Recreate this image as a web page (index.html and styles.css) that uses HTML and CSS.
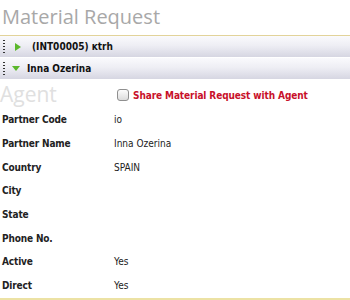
FILE: index.html
```html
<!DOCTYPE html>
<html lang="en">
<head>
    <meta charset="UTF-8">
    <title>Material Request</title>
    <link rel="stylesheet" href="styles.css">
</head>
<body>
    <h1 class="title">Material Request</h1>

    <div class="panel">
        <div class="bar">
            <span class="grip"></span>
            <span class="arrow-right"></span>
            <span class="bar-text">(INT00005) ĸtrh</span>
        </div>
        <div class="bar">
            <span class="grip"></span>
            <span class="arrow-down"></span>
            <span class="bar-text">Inna Ozerina</span>
        </div>
    </div>

    <div class="agent-head">
        <h2 class="agent">Agent</h2>
        <label class="share">
            <span class="box"></span>
            Share Material Request with Agent
        </label>
    </div>

    <table class="details">
        <tr><th>Partner Code</th><td>io</td></tr>
        <tr><th>Partner Name</th><td>Inna Ozerina</td></tr>
        <tr><th>Country</th><td>SPAIN</td></tr>
        <tr><th>City</th><td></td></tr>
        <tr><th>State</th><td></td></tr>
        <tr><th>Phone No.</th><td></td></tr>
        <tr><th>Active</th><td>Yes</td></tr>
        <tr><th>Direct</th><td>Yes</td></tr>
    </table>
    <div class="footer-line"></div>
</body>
</html>
```

FILE: styles.css
```css
* {
    margin: 0;
    padding: 0;
    box-sizing: border-box;
}

body {
    background-color: #fff;
    font-family: "DejaVu Sans Condensed", "DejaVu Sans", sans-serif;
    font-size: 10px;
    color: #222;
    width: 350px;
}

.title {
    font-family: "Open Sans", sans-serif;
    font-weight: normal;
    font-size: 20px;
    color: #a8a8a8;
    height: 35px;
    line-height: 30px;
    padding: 2px 0 0 2px;
}

.panel {
    border-top: 1px solid #e2d39a;
}

.bar {
    height: 22px;
    display: flex;
    align-items: center;
    background: linear-gradient(#fafafd, #eeeef4 45%, #d6d6e2);
    border-bottom: 1px solid #fff;
}

.grip {
    width: 2px;
    height: 14px;
    margin-left: 3px;
    background: repeating-linear-gradient(#333 0 1px, transparent 1px 3px);
}

.arrow-right {
    width: 0;
    height: 0;
    margin-left: 10px;
    border-top: 4px solid transparent;
    border-bottom: 4px solid transparent;
    border-left: 6px solid #5cb82c;
}

.arrow-down {
    width: 0;
    height: 0;
    margin-left: 7px;
    border-left: 4px solid transparent;
    border-right: 4px solid transparent;
    border-top: 5px solid #5cb82c;
}

.bar .bar-text {
    font-weight: bold;
    color: #111;
    margin-left: 7px;
}

.bar:first-child .bar-text {
    margin-left: 11px;
}

.agent-head {
    display: flex;
    align-items: center;
    height: 26px;
}

.agent {
    font-family: "Open Sans", sans-serif;
    font-weight: normal;
    font-size: 21px;
    color: #e0e0e0;
    width: 117px;
    line-height: 24px;
    margin-top: 1px;
}

.share {
    display: flex;
    align-items: center;
    font-weight: bold;
    color: #c8102a;
    margin-top: 4px;
    letter-spacing: -0.1px;
}

.box {
    width: 12px;
    height: 12px;
    border: 1px solid #8f8f8f;
    border-radius: 3px;
    background: linear-gradient(#fcfcfc, #dcdcdc);
    margin-right: 4px;
}

.details {
    border-collapse: collapse;
    margin-top: 2px;
}

.details th {
    text-align: left;
    font-weight: bold;
    width: 114px;
    padding-left: 2px;
    height: 23.7px;
    letter-spacing: -0.15px;
}

.details td {
    height: 23.7px;
    color: #222;
}

.footer-line {
    border-top: 2px solid #ece2a4;
}
```
